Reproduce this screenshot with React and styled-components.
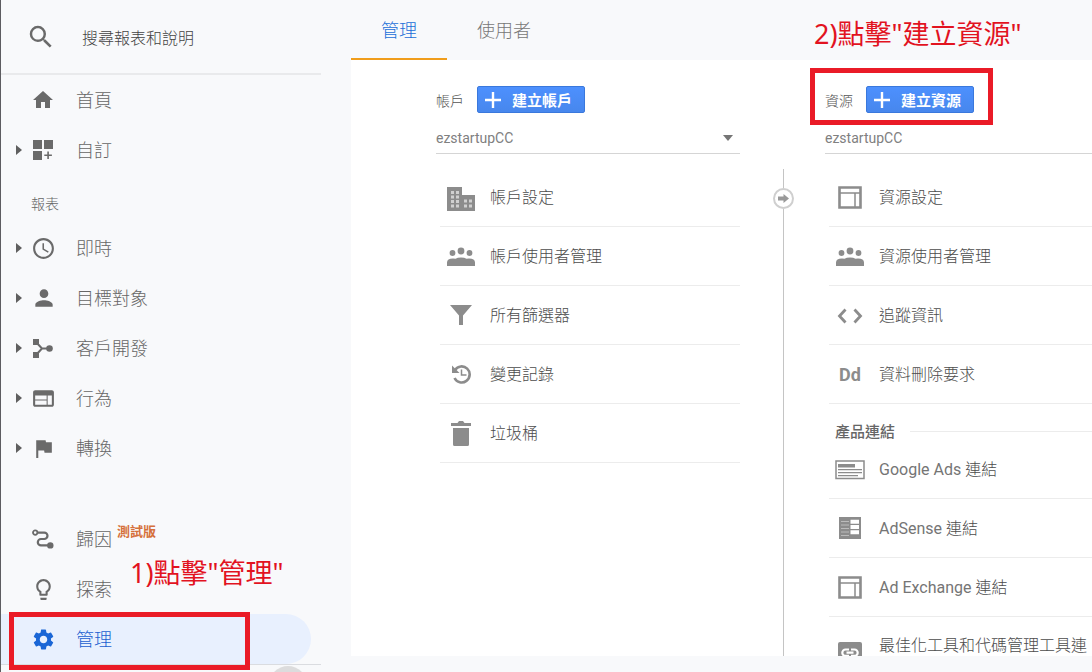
import React from 'react';
import styled, { createGlobalStyle } from 'styled-components';
import {
  MdSearch, MdHome, MdAccessTime, MdPerson, MdWeb, MdFlag,
  MdLightbulbOutline, MdSettings,
} from 'react-icons/md';

const cjk = `'Noto Sans CJK TC', sans-serif`;

const GlobalStyle = createGlobalStyle`
  *, *::before, *::after { box-sizing: border-box; }
  body {
    margin: 0;
    background: #f8f9fb;
    font-family: Roboto, ${cjk};
    color: #666;
  }
  a { color: inherit; text-decoration: none; }
  svg { display: block; }
`;

const Shell = styled.div`
  display: flex;
  height: 100vh;
  overflow: hidden;
`;

const Sidebar = styled.aside`
  flex: 0 0 351px;
  display: flex;
  flex-direction: column;
  border-left: 1px solid #5c5c60;
`;

const SearchBar = styled.label`
  display: flex;
  align-items: center;
  height: 75px;
  width: 320px;
  padding-left: 25px;
  gap: 26px;
  border-bottom: 2px solid #e9eaec;
  color: #6a6a6a;
`;

const SearchInput = styled.input`
  flex: 1;
  min-width: 0;
  padding: 0;
  border: 0;
  outline: 0;
  background: none;
  font: 300 16px/24px ${cjk};
  color: #444;
  &::placeholder { color: #444; opacity: 1; }
`;

const NavGroup = styled.nav`
  margin-top: ${(p) => (p.$spaced ? '41px' : '0')};
`;

const NavHeading = styled.h2`
  margin: 0;
  padding: 18px 0 10px 30px;
  font: 300 14px/20px ${cjk};
  color: #666;
`;

const NavLink = styled.a`
  position: relative;
  display: flex;
  align-items: center;
  width: 310px;
  height: 50px;
  padding-left: 15px;
  border-radius: 0 25px 25px 0;
  background: ${(p) => (p.$active ? '#e8f0fe' : 'none')};
  color: ${(p) => (p.$active ? '#1a5fd0' : '#666')};
  font: 300 18px/26px ${cjk};
`;

const Caret = styled.span`
  width: 6px;
  height: 10px;
  margin-right: 9px;
  background: ${(p) => (p.$shown ? '#5f5f5f' : 'none')};
  clip-path: polygon(0 0, 100% 50%, 0 100%);
`;

const NavIcon = styled.span`
  display: grid;
  place-items: center;
  width: 24px;
  margin-right: 21px;
  color: ${(p) => (p.$active ? '#1a66d6' : '#6a6a6a')};
`;

const NavText = styled.span`
  padding-bottom: 2px;
`;

const Beta = styled.span`
  align-self: flex-start;
  margin: 8px 0 0 5px;
  font: 700 13px/18px ${cjk};
  color: #d5703a;
`;

const SidebarFooter = styled.div`
  flex: 1;
  width: 320px;
  overflow: hidden;
  border-top: 1px solid #dadce0;
`;

const CollapseButton = styled.button`
  display: block;
  width: 38px;
  height: 38px;
  margin: 1px 0 0 268px;
  border: 0;
  border-radius: 50%;
  background: #dcdcdd;
`;

const Note = styled.span`
  position: absolute;
  left: ${(p) => p.$left}px;
  top: ${(p) => p.$top}px;
  white-space: nowrap;
  font: 400 27px/36px 'Noto Sans', ${cjk};
  color: #e2131f;
`;

const Outline = styled.span`
  position: absolute;
  inset: ${(p) => p.$inset};
  border: 5px solid #ea1b27;
  pointer-events: none;
`;

const Main = styled.main`
  flex: 1;
  min-width: 0;
  display: flex;
  flex-direction: column;
  padding-bottom: 16px;
`;

const Tabs = styled.nav`
  position: relative;
  display: flex;
  height: 60px;
`;

const Tab = styled.a`
  padding: 16px 30px 0;
  border-bottom: 2px solid ${(p) => (p.$active ? '#f09d1b' : 'transparent')};
  font: 300 18px/26px ${cjk};
  color: ${(p) => (p.$active ? '#1a6fd8' : '#777')};
`;

const Panel = styled.section`
  flex: 1;
  min-height: 0;
  display: flex;
  padding-left: 85px;
  overflow: hidden;
  background: #fff;
`;

const Column = styled.div`
  flex: 0 0 304px;
  padding-top: 26px;
`;

const ColumnHeader = styled.div`
  position: relative;
  display: flex;
  align-items: center;
  gap: 13px;
  width: fit-content;
  height: 27px;
  font: 300 14px/20px ${cjk};
  color: #555;
`;

const CreateButton = styled.button`
  display: flex;
  align-items: center;
  gap: 11px;
  height: 27px;
  padding: 0 12px 0 7px;
  border: 1px solid #3a78dc;
  border-radius: 2px;
  background: linear-gradient(#4d90fe, #4787ed);
  font: 700 15px/20px ${cjk};
  color: #fff;
`;

const Picker = styled.div`
  display: flex;
  align-items: center;
  height: 31px;
  margin: 10px 0 14px;
  padding-right: 7px;
  border-bottom: 1px solid #d5d5d5;
`;

const Select = styled.select`
  flex: 1;
  appearance: none;
  padding: 0;
  border: 0;
  outline: 0;
  background: none;
  font: 400 14px/20px Roboto, sans-serif;
  color: #808080;
`;

const Arrow = styled.span`
  width: 10px;
  height: 6px;
  background: #757575;
  clip-path: polygon(0 0, 100% 0, 50% 100%);
`;

const List = styled.ul`
  margin: 0 0 0 4px;
  padding: 0;
  list-style: none;
`;

const Row = styled.a`
  display: flex;
  align-items: center;
  gap: 8px;
  height: ${(p) => (p.$tall ? '72px' : '59px')};
  padding-top: 2px;
  border-bottom: 1px solid #ececec;
  white-space: nowrap;
  font: 300 16px/24px Roboto, ${cjk};
  color: #4c4c4c;
`;

const RowText = styled.span`
  align-self: ${(p) => (p.$tall ? 'flex-start' : 'center')};
  padding-top: ${(p) => (p.$tall ? '15px' : '0')};
`;

const Latin = styled.span`
  font-weight: 400;
  color: #757575;
`;

const RowIcon = styled.span`
  display: grid;
  place-items: center;
  width: 42px;
  color: #8c8c8c;
`;

const Dd = styled.b`
  font: 700 18px/24px Roboto, sans-serif;
`;

const GroupTitle = styled.h3`
  display: flex;
  align-items: center;
  gap: 15px;
  margin: 0;
  padding: 18px 0 0 10px;
  font: 500 15px/18px ${cjk};
  color: #666;
  &::after {
    content: '';
    flex: 1;
    height: 1px;
    background: #ececec;
  }
`;

const Connector = styled.div`
  flex: 0 0 85px;
  display: flex;
  flex-direction: column;
  align-items: center;
  padding: 109px 0 0 2px;
`;

const Line = styled.span`
  width: 1px;
  flex: ${(p) => (p.$fill ? '1' : '0 0 19px')};
  background: #c4c4c4;
`;

const Node = styled.button`
  display: grid;
  place-items: center;
  width: 21px;
  height: 21px;
  padding: 0;
  border: 2px solid #cfcfcf;
  border-radius: 50%;
  background: #fff;
  color: #999;
`;

const svg = (w, h, children) => (
  <svg width={w} height={h} viewBox={`0 0 ${w} ${h}`} fill="currentColor" aria-hidden="true">{children}</svg>
);

const customizeIcon = svg(20, 20, (
  <path d="M0 0h9v9H0zM11 0h9v9h-9zM0 11h9v9H0zM14.3 11.5h1.6v3h3v1.6h-3v3h-1.6v-3h-3v-1.6h3z" />
));
const acquisitionIcon = svg(20, 20, (
  <>
    <path d="M0 1h6v6H0zM0 14h6v6H0z" />
    <circle cx="16.5" cy="10.5" r="3.3" />
    <path d="M3 4l6 6.5L3 17M9 10.5h7" fill="none" stroke="currentColor" strokeWidth="2" />
  </>
));
const routeIcon = svg(22, 20, (
  <>
    <circle cx="3.2" cy="3.6" r="2.2" fill="none" stroke="currentColor" strokeWidth="1.8" />
    <circle cx="18.3" cy="16.4" r="3.2" />
    <path d="M5.5 3.6h6.8a3.2 3.2 0 0 1 0 6.4H9a3.2 3.2 0 0 0 0 6.4h8" fill="none" stroke="currentColor" strokeWidth="2.2" />
  </>
));
const plusIcon = svg(16, 16, <path d="M6.8 0h2.4v6.8H16v2.4H9.2V16H6.8V9.2H0V6.8h6.8z" />);
const buildingIcon = svg(28, 28, (
  <>
    <path d="M0 3h15v8h13v16H0z" />
    <path
      d="M4 7h3v3H4zM9 7h3v3H9zM4 11.5h3v3H4zM9 11.5h3v3H9zM4 16h3v3H4zM9 16h3v3H9zM4 20.5h3v3H4zM9 20.5h3v3H9zM17 15.5h3v3h-3zM22 15.5h3v3h-3zM17 20.5h3v3h-3zM22 20.5h3v3h-3z"
      fill="#d0d0d0"
    />
  </>
));
const peopleIcon = svg(28, 20, (
  <>
    <circle cx="14" cy="4" r="3.4" />
    <circle cx="5.5" cy="6" r="2.9" />
    <circle cx="22.5" cy="6" r="2.9" />
    <path d="M0 19v-3.5q0-4 6-4 1.5 0 2.5.2Q10.5 10.5 14 10.5t5.5 1.2q1-.2 2.5-.2 6 0 6 4V19z" />
  </>
));
const funnelIcon = svg(24, 22, <path d="M1 0h22l-9 10.5V20h-4v-9.5z" />);
const historyIcon = svg(20, 24, (
  <>
    <path d="M4 7A8 8 0 1 1 3.500 15" fill="none" stroke="currentColor" strokeWidth="2.600" />
    <path d="M1 2.500v7.500h7.500z" />
    <path d="M10.500 6.500V12h5" fill="none" stroke="currentColor" strokeWidth="1.500" />
  </>
));
const trashIcon = svg(20, 26, <path d="M0 2h6.5L8 0h4l1.5 2H20v3H0zM2 7h16v16.5q0 1.5-1.5 1.5h-13Q2 25 2 23.5z" />);
const codeIcon = svg(26, 16, (
  <path d="M8.5 1.5L2.5 8l6 6.5M17.5 1.5l6 6.5-6 6.5" fill="none" stroke="currentColor" strokeWidth="2.8" />
));
const layoutIcon = svg(24, 24, (
  <>
    <path d="M1.5 1.5h21v20h-21z" fill="none" stroke="currentColor" strokeWidth="2.6" />
    <path d="M2 7h20M17 7v14" fill="none" stroke="currentColor" strokeWidth="1.5" />
  </>
));
const adsIcon = svg(30, 20, (
  <>
    <path d="M1 1h28v17.500H1z" fill="none" stroke="currentColor" strokeWidth="1.500" />
    <path d="M3 4h17v3.500H3zM3 9h24v1.300H3zM3 12h24v1.300H3zM3 15h20v1.300H3z" />
  </>
));
const adsenseIcon = svg(22, 24, (
  <>
    <path d="M0 0h22v22H0z" />
    <path d="M11.5 2.800H20v4h-8.500zM11.500 8H20v4h-8.500zM11.500 13.200H20v4h-8.500z" fill="#fff" />
    <path d="M2 4.500h8M2 8h8M2 11.500h8M2 15h8M2 18.500h8" stroke="#bbb" />
  </>
));
const linkIcon = svg(24, 24, (
  <>
    <rect width="24" height="24" rx="2" />
    <path
      d="M11 7.5H7.5a3.2 3.2 0 0 0 0 6.4H11M13 7.5h3.5a3.2 3.2 0 0 1 0 6.4H13M8.5 10.7h7"
      fill="none" stroke="#fff" strokeWidth="2.2"
    />
  </>
));
const arrowIcon = svg(11, 9, <path d="M0 2.5h5.5V0L11 4.5 5.5 9V6.5H0z" />);

function NavItem({ icon, text, expandable, active, children }) {
  return (
    <NavLink href="#" $active={active} aria-current={active ? 'page' : undefined}>
      <Caret $shown={expandable} />
      <NavIcon $active={active}>{icon}</NavIcon>
      <NavText>{text}</NavText>
      {children}
    </NavLink>
  );
}

function Item({ icon, latin, text, tall }) {
  return (
    <li>
      <Row href="#" $tall={tall}>
        <RowIcon>{icon}</RowIcon>
        <RowText $tall={tall}>{latin && <Latin>{latin} </Latin>}{text}</RowText>
      </Row>
    </li>
  );
}

function AccountPicker({ label }) {
  return (
    <Picker>
      <Select aria-label={label} defaultValue="ezstartupCC">
        <option>ezstartupCC</option>
      </Select>
      <Arrow />
    </Picker>
  );
}

export default function App() {
  return (
    <>
      <GlobalStyle />
      <Shell lang="zh-Hant">
        <Sidebar>
          <SearchBar>
            <MdSearch size={30} />
            <SearchInput type="text" placeholder="搜尋報表和說明" aria-label="搜尋報表和說明" />
          </SearchBar>
          <NavGroup>
            <NavItem icon={<MdHome size={24} />} text="首頁" />
            <NavItem icon={customizeIcon} text="自訂" expandable />
            <NavHeading>報表</NavHeading>
            <NavItem icon={<MdAccessTime size={25} />} text="即時" expandable />
            <NavItem icon={<MdPerson size={26} />} text="目標對象" expandable />
            <NavItem icon={acquisitionIcon} text="客戶開發" expandable />
            <NavItem icon={<MdWeb size={25} />} text="行為" expandable />
            <NavItem icon={<MdFlag size={25} />} text="轉換" expandable />
          </NavGroup>
          <NavGroup $spaced>
            <NavItem icon={routeIcon} text="歸因"><Beta>測試版</Beta></NavItem>
            <NavItem icon={<MdLightbulbOutline size={25} />} text="探索">
              <Note $left={129} $top={-9}>1)點擊"管理"</Note>
            </NavItem>
            <NavItem icon={<MdSettings size={25} />} text="管理" active>
              <Outline $inset="-2px 61px -6px 8px" />
            </NavItem>
          </NavGroup>
          <SidebarFooter>
            <CollapseButton type="button" aria-label="收合選單" />
          </SidebarFooter>
        </Sidebar>

        <Main>
          <Tabs>
            <Tab href="#" $active aria-current="page">管理</Tab>
            <Tab href="#">使用者</Tab>
            <Note $left={463} $top={16}>2)點擊"建立資源"</Note>
          </Tabs>
          <Panel>
            <Column>
              <ColumnHeader>
                帳戶
                <CreateButton type="button">{plusIcon}建立帳戶</CreateButton>
              </ColumnHeader>
              <AccountPicker label="帳戶" />
              <List>
                <Item icon={buildingIcon} text="帳戶設定" />
                <Item icon={peopleIcon} text="帳戶使用者管理" />
                <Item icon={funnelIcon} text="所有篩選器" />
                <Item icon={historyIcon} text="變更記錄" />
                <Item icon={trashIcon} text="垃圾桶" />
              </List>
            </Column>
            <Connector>
              <Line />
              <Node type="button" aria-label="移動">{arrowIcon}</Node>
              <Line $fill />
            </Connector>
            <Column>
              <ColumnHeader>
                資源
                <CreateButton type="button">{plusIcon}建立資源</CreateButton>
                <Outline $inset="-18px -19px -12px -15px" />
              </ColumnHeader>
              <AccountPicker label="資源" />
              <List>
                <Item icon={layoutIcon} text="資源設定" />
                <Item icon={peopleIcon} text="資源使用者管理" />
                <Item icon={codeIcon} text="追蹤資訊" />
                <Item icon={<Dd>Dd</Dd>} text="資料刪除要求" />
              </List>
              <GroupTitle>產品連結</GroupTitle>
              <List>
                <Item icon={adsIcon} latin="Google Ads" text="連結" />
                <Item icon={adsenseIcon} latin="AdSense" text="連結" />
                <Item icon={layoutIcon} latin="Ad Exchange" text="連結" />
                <Item icon={linkIcon} text="最佳化工具和代碼管理工具連" tall />
              </List>
            </Column>
          </Panel>
        </Main>
      </Shell>
    </>
  );
}
